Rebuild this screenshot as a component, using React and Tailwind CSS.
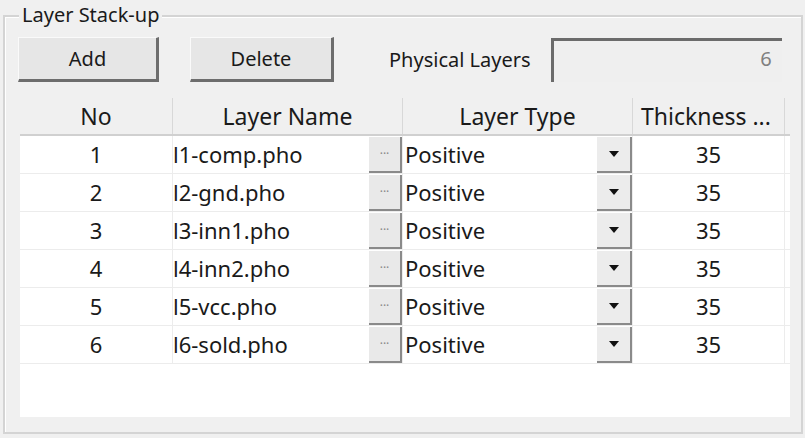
import React from "react";

const rows = [
  ["1", "l1-comp.pho"],
  ["2", "l2-gnd.pho"],
  ["3", "l3-inn1.pho"],
  ["4", "l4-inn2.pho"],
  ["5", "l5-vcc.pho"],
  ["6", "l6-sold.pho"],
];

function Btn({ label, className }) {
  return (
    <div
      className={
        "flex h-[45px] items-center justify-center bg-[#e6e6e6] border-t border-l border-[#fafafa] border-r-[3px] border-b-[3px] border-r-[#6d6d6d] border-b-[#6d6d6d] text-[20px] text-[#1a1a1a] " +
        className
      }
    >
      {label}
    </div>
  );
}

export default function App() {
  return (
    <div
      className="w-[805px] h-[438px] bg-[#f0f0f0] pt-[15px] pl-[3px] pr-[2px] pb-[4px]"
      style={{ fontFamily: '"Noto Sans", "Open Sans", sans-serif' }}
    >
      <div className="relative h-full border-2 border-[#d4d4d4] shadow-[inset_1px_1px_0_#ffffff]">
        <div className="absolute left-[14px] top-[-14px] bg-[#f0f0f0] px-[3px] text-[20px] leading-[24px] text-[#1a1a1a]">
          Layer Stack-up
        </div>
        <div className="flex items-center pt-[20px] pl-[13px]">
          <Btn label="Add" className="w-[141px]" />
          <Btn label="Delete" className="w-[144px] ml-[31px]" />
          <div className="ml-[55px] text-[20px] text-[#1a1a1a]">Physical Layers</div>
          <div className="ml-[20px] flex h-[44px] w-[231px] items-start justify-end border-t-[3px] border-l-[3px] border-[#6b6b6b] bg-[#efefef] pr-[10px] pt-[3px] text-[20px] text-[#808080]">
            6
          </div>
        </div>
        <div className="ml-[15px] mr-[11px] mt-[16px] h-[319px] bg-white text-[22px] text-[#1a1a1a]">
          <div className="flex h-[38px] border-b-2 border-[#d0d0d0] bg-[#f0f0f0] text-[23px]">
            <div className="flex w-[153px] items-center justify-center border-r border-[#d8d8d8]">No</div>
            <div className="flex w-[230px] items-center justify-center border-r border-[#d8d8d8]">Layer Name</div>
            <div className="flex w-[230px] items-center justify-center border-r border-[#d8d8d8]">Layer Type</div>
            <div className="flex w-[152px] items-center justify-start pl-[8px] border-r border-[#d8d8d8] whitespace-nowrap overflow-hidden">Thickness ...</div>
          </div>
          {rows.map(([n, name]) => (
            <div key={n} className="flex h-[38px] border-b border-[#ececec]">
              <div className="flex w-[153px] items-center justify-center border-r border-[#ececec]">{n}</div>
              <div className="flex w-[230px] items-center border-r border-[#ececec]">
                <span className="flex-1 pl-[0px]">{name}</span>
                <div className="flex h-[36px] w-[33px] items-center justify-center bg-[#e9e9e9] border-r-2 border-b-2 border-[#8a8a8a] text-[12px] text-[#888] leading-none">
                  ···
                </div>
              </div>
              <div className="flex w-[230px] items-center border-r border-[#ececec]">
                <span className="flex-1 pl-[2px]">Positive</span>
                <div className="flex h-[36px] w-[35px] items-center justify-center bg-[#ececec] border-r-2 border-b-2 border-[#8a8a8a]">
                  <svg width="10" height="6" viewBox="0 0 10 6">
                    <path d="M0 0 L10 0 L5 6 Z" fill="#111" />
                  </svg>
                </div>
              </div>
              <div className="flex w-[152px] items-center justify-center border-r border-[#ececec]">35</div>
            </div>
          ))}
        </div>
      </div>
    </div>
  );
}
